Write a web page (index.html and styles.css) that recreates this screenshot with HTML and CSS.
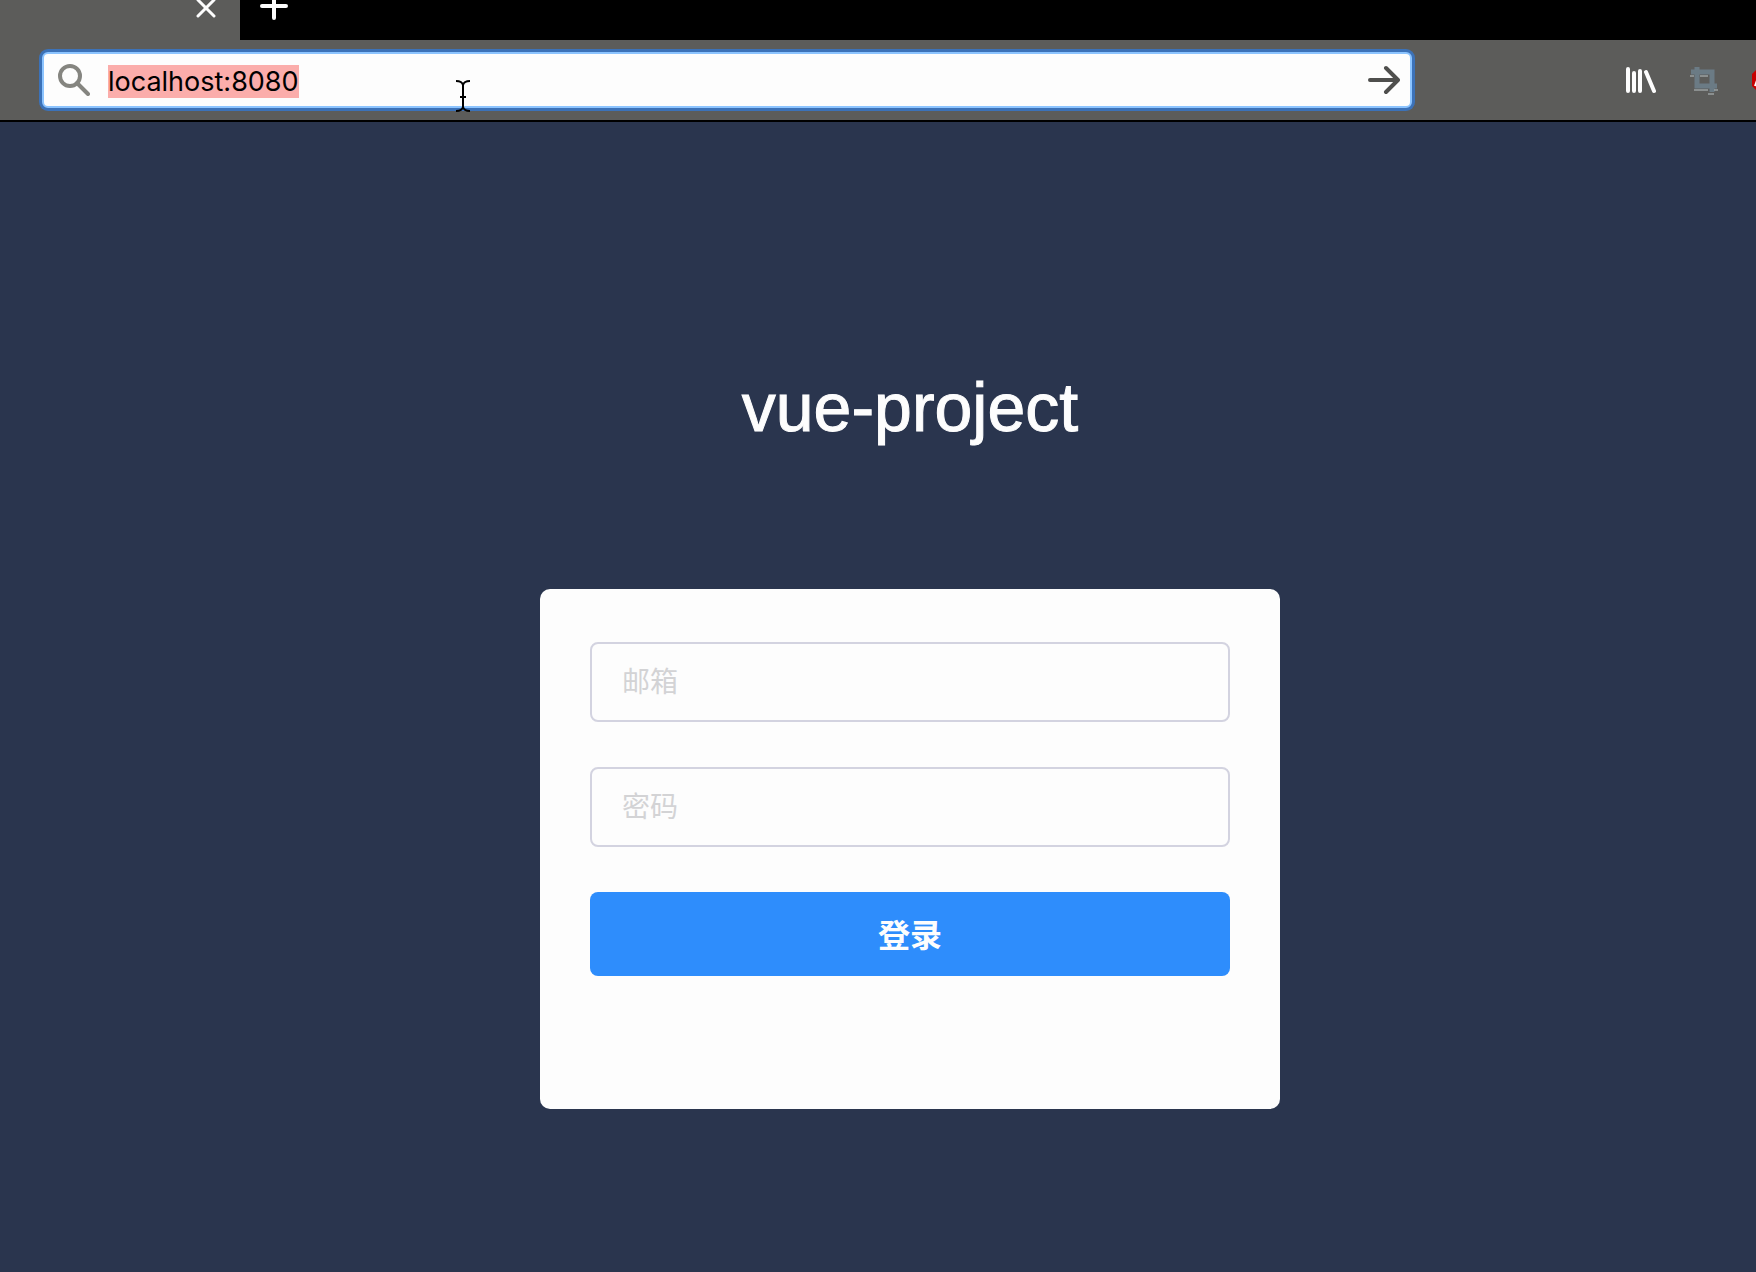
FILE: index.html
```html
<!DOCTYPE html>
<html lang="zh-CN">
<head>
<meta charset="utf-8">
<meta name="viewport" content="width=device-width, initial-scale=1">
<title>vue-project</title>
<link rel="stylesheet" href="styles.css">
</head>
<body>
<header class="browser">
  <div class="tab-strip">
    <div class="tab">
      <button class="icon-button" type="button" aria-label="Close tab">
        <svg width="28" height="28" viewBox="0 0 28 28"><path class="line line-thin" d="M6 6l16 16M22 6L6 22"/></svg>
      </button>
    </div>
    <button class="icon-button new-tab" type="button" aria-label="New tab">
      <svg width="32" height="32" viewBox="0 0 32 32"><path class="line" d="M4 14h24M16 2v24"/></svg>
    </button>
  </div>
  <div class="toolbar">
    <form class="url-bar">
      <svg class="search-icon" width="32" height="32" viewBox="0 0 32 32" aria-hidden="true"><circle cx="12" cy="12" r="10"/><path d="M19 19l11 11"/></svg>
      <input class="url-input" id="url" type="text" value="localhost:8080" aria-label="Address" spellcheck="false">
      <button class="icon-button go" type="submit" aria-label="Go">
        <svg width="32" height="32" viewBox="0 0 32 32"><path class="line" d="M2 16h27M18 4l12 12-12 12"/></svg>
      </button>
      <svg class="pointer" width="16" height="34" viewBox="0 0 16 34" aria-hidden="true"><path d="M1 2q6 0 7 4q1-4 7-4M8 5v24M1 32q6 0 7-4q1 4 7 4M5 18h6"/></svg>
    </form>
    <div class="actions">
      <button class="icon-button" type="button" aria-label="Library">
        <svg width="32" height="32" viewBox="0 0 32 32"><path class="line" d="M4 5v22M10 9v18M16 7v20M22 8l8 19"/></svg>
      </button>
      <button class="icon-button" type="button" aria-label="Crop">
        <svg width="32" height="32" viewBox="0 0 32 32"><path class="crop-shape" d="M3 8h21v20M9 3v19h20"/><path class="crop-edge" d="M2 12h4M12 12h8M6 26h14M20 30h6M26 26h4"/></svg>
      </button>
      <button class="icon-button" type="button" aria-label="Blocker">
        <svg width="32" height="32" viewBox="0 0 32 32"><path class="blocker-shape" d="M4 6h14l4 4v12l-4 4H4l-4-4V10z"/><path class="blocker-mark" d="M3 22l4-11 4 11M5 19h4"/></svg>
      </button>
    </div>
  </div>
</header>
<main class="page">
  <h1 class="title">vue-project</h1>
  <form class="card">
    <input class="field" type="email" placeholder="邮箱" aria-label="邮箱">
    <input class="field" type="password" placeholder="密码" aria-label="密码">
    <button class="submit" type="submit">登录</button>
  </form>
</main>
<script src="script.js"></script>
</body>
</html>
```
FILE: styles.css
```css
* {
  box-sizing: border-box;
}

body {
  margin: 0;
  min-height: 100vh;
  display: flex;
  flex-direction: column;
  overflow: hidden;
  background: #2a354e;
  font-family: "Liberation Sans", "Noto Sans CJK SC", sans-serif;
}

.browser {
  margin-top: -24px;
  border-bottom: 2px solid #000;
  overflow: hidden;
}

.tab-strip {
  display: flex;
  align-items: center;
  gap: 18px;
  height: 64px;
  background: #000;
}

.tab {
  display: flex;
  align-items: center;
  justify-content: flex-end;
  width: 240px;
  height: 100%;
  padding-right: 20px;
  background: #5c5c5a;
}

.icon-button {
  display: block;
  flex: none;
  padding: 0;
  border: 0;
  background: none;
}

.icon-button svg {
  display: block;
}

.line {
  fill: none;
  stroke: #fdfdfd;
  stroke-width: 4;
  stroke-linecap: round;
  stroke-linejoin: round;
}

.line-thin {
  stroke-width: 3;
}

.toolbar {
  display: flex;
  align-items: center;
  gap: 212px;
  height: 80px;
  padding-left: 42px;
  background: #5c5c5a;
}

.url-bar {
  position: relative;
  flex: 1;
  display: flex;
  align-items: center;
  height: 56px;
  padding: 0 10px 0 14px;
  border: 2px solid #8cc4ff;
  border-radius: 6px;
  background: #fdfdfd;
  box-shadow: 0 0 0 3px #3c72b8;
}

.search-icon {
  flex: none;
  fill: none;
  stroke: #858580;
  stroke-width: 4;
  stroke-linecap: round;
}

.url-input {
  flex: 1;
  min-width: 0;
  height: 40px;
  margin: 0 16px 0 18px;
  padding: 2px 0 0;
  border: 0;
  outline: 0;
  background: transparent;
  color: #000;
  font-family: Inter, sans-serif;
  font-size: 27px;
}

.url-input::selection {
  background: #fbadab;
  color: #000;
}

.go .line {
  stroke: #4f4f4d;
}

.pointer {
  position: absolute;
  top: 25px;
  left: 411px;
  fill: none;
  stroke: #000;
  stroke-width: 2;
}

.actions {
  display: flex;
  gap: 32px;
  margin-right: -28px;
}

.crop-shape {
  fill: none;
  stroke: #6b7b85;
  stroke-width: 5;
}

.crop-edge {
  fill: none;
  stroke: #b9c2c4;
  stroke-width: 1;
}

.blocker-shape {
  fill: #c70000;
}

.blocker-mark {
  fill: none;
  stroke: #fff;
  stroke-width: 2;
}

.page {
  flex: 1;
  display: flex;
  flex-direction: column;
  align-items: center;
  padding: 245px 0 64px 64px;
}

.title {
  margin: 0 0 142px;
  color: #fdfdfd;
  font-size: 68px;
  font-weight: 400;
  line-height: 80px;
  -webkit-text-stroke: 1px #fdfdfd;
}

.card {
  display: flex;
  flex-direction: column;
  gap: 45px;
  width: 100%;
  max-width: 740px;
  padding: 53px 50px 133px;
  border-radius: 10px;
  background: #fdfdfd;
}

.field {
  height: 80px;
  padding: 2px 30px 0;
  border: 2px solid #d3d3e0;
  border-radius: 8px;
  background: transparent;
  font-family: inherit;
  font-size: 28px;
}

.field::placeholder {
  color: #d3d3d5;
}

.submit {
  height: 84px;
  padding: 0 0 2px;
  border: 0;
  border-radius: 8px;
  background: #2e8dfc;
  color: #fdfdfd;
  font-family: inherit;
  font-size: 32px;
  font-weight: 700;
}
```
FILE: script.js
```js
const url = document.getElementById("url");
url.focus();
url.select();
```
